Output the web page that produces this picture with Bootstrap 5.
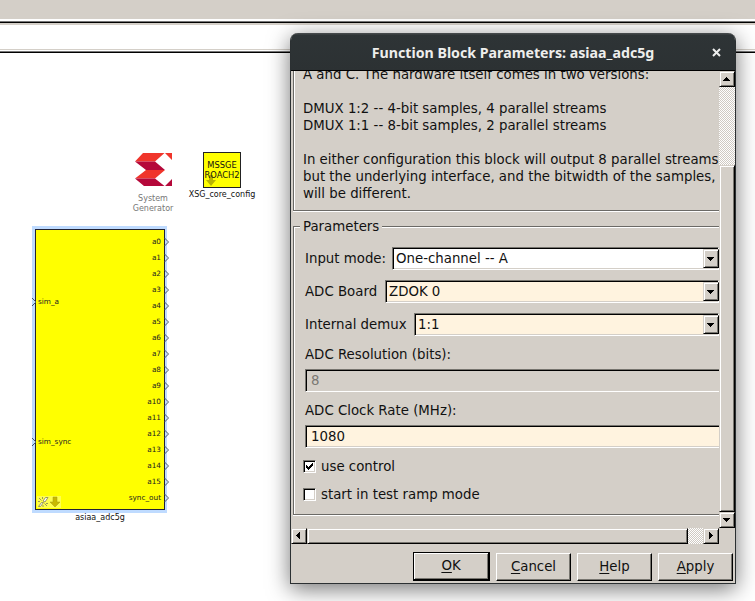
<!DOCTYPE html>
<html lang="en">
<head>
<meta charset="utf-8">
<title>Function Block Parameters: asiaa_adc5g</title>
<link href="https://cdn.jsdelivr.net/npm/bootstrap@5.3.0/dist/css/bootstrap.min.css" rel="stylesheet">
<style>
:root{--face:#d4cfc8;--dk:#6b6a66;--cream:#fff3df}
body{width:755px;height:601px;overflow:hidden;background:#fff;color:#111;font-family:"DejaVu Sans",sans-serif;font-size:13.333px;line-height:17px}
.toolstrip{height:25px;background:linear-gradient(var(--face) 0 19px,#fff 19px 21px,#777 21px 22px,#000 22px 23px,var(--face) 23px)}
.pathstrip{height:28px;background:linear-gradient(#fff 0 24px,#d4cfc8 24px 25px,#fff 25px 26px,#777 26px 27px,#000 27px)}
/* diagram */
.node{position:absolute}
.tiny{font-size:8px;line-height:10px;white-space:nowrap}
.xsg{left:188px;top:152px;width:68px}
.yellow{background:#ff0;border:1px solid #222}
.xsg .yellow{width:38px;height:36px;font-size:8.3px;line-height:10px;padding-top:7px;position:relative}
.xsg .yellow span{position:relative}
.xsg .yellow svg{position:absolute;left:2px;bottom:1px}
.xsg .name1{margin-top:2px}
.sysgen{left:128px;top:152px;width:50px;color:#777}
.sysgen .name2{margin-top:6px;line-height:10px}
.adc{left:32px;top:226px;width:135px;height:287px;background:#bfdbff;padding:3px 2px 3px 3px}
.adc .yellow{height:281px;position:relative;color:#222;border-color:#223}
.adc .cap{padding-top:3px}
.outs{padding-top:4px}
.prt{height:16px;line-height:16px;font-size:7.3px;padding-right:3px;position:relative}
.prt svg{position:absolute;left:100%;top:3px}
.inp{position:absolute;left:2px;font-size:7.3px}
.in-a{top:67px}.in-sync{top:207px}
.inp svg{position:absolute;left:-7px;top:0}
.marks{position:absolute;left:1px;bottom:1px}
/* dialog */
.dlg{position:absolute;left:290px;top:33px;width:446px;height:551px;border:1px solid #2b3032;border-top:0;border-radius:8px 8px 0 0;background:var(--face);box-shadow:0 5px 22px rgba(0,0,0,.55)}
.ttl{height:38px;flex:none;background:linear-gradient(#45494b 0 1px,#2e3436 2px,#2c3133);border-bottom:1px solid #000;border-radius:7px 7px 0 0;color:#eeeeec;font:bold 14.2px/40px "Noto Sans",sans-serif;position:relative}
.ttl svg{position:absolute;right:14px;top:15px}
.view{width:428px;height:457px;overflow:hidden;padding-left:2px}
.fr{border:1px solid var(--dk);border-right:0;box-shadow:inset 1px 0 #fff,0 1px #fff}
.desc{display:flow-root;border-top:0;height:140px;padding-left:9px;white-space:pre}
.desc div{margin-top:-5px}
.prm{margin-top:15px;height:289px;padding:20px 0 0 11px;box-shadow:inset 1px 1px #fff,0 1px #fff;position:relative}
.prm>.lg{position:absolute;left:6px;top:-9px;background:var(--face);padding:0 3px}
.rw{height:23px;margin-bottom:10px}
.l1{width:87px;flex:none}.l2{width:80px;flex:none}.l3{width:109px;flex:none}
.sunk{height:23px;border:1px solid;border-color:#77756f #fff #fff #77756f;box-shadow:inset 1px 1px #000,inset -1px -1px var(--face);background:var(--cream);padding-left:3px;line-height:21px;min-width:0}
.sunk.edit{padding-left:5px;border-right:0;box-shadow:inset 1px 1px #000,inset 0 -1px var(--face)}
.off{background:var(--face);color:#7a7873}
.up{background:var(--face);border:1px solid;border-color:var(--face) #000 #000 var(--face);box-shadow:inset 1px 1px #fff,inset -1px -1px #77756f}
.drop{width:16px;margin:1px -1px 0 0;height:19px;flex:none}
.up svg{display:block}
.lb{height:23px}
.lb2{margin-top:10px}
.ck{height:28px;gap:5px;margin-left:-2px}
.sunk.edit+.ck{margin-top:4px}
.ckb{width:13px;height:13px;background:#fff;border:1px solid;border-color:#77756f #fff #fff #77756f;box-shadow:inset 1px 1px #000,inset -1px -1px var(--face)}
.ckb svg{display:block}
.dither{background:repeating-conic-gradient(#fff 0 25%,#cfcac3 0 50%) 0 0/2px 2px}
.vs{width:16px;height:457px}
.sb{width:16px;height:16px;flex:none}
.hs{width:428px;height:16px}
.thumbv{height:347px}.thumbh{width:381px}
.acts{height:39px;gap:6px;padding:8px 2px 0 0}
.btn3{width:75px;height:28px;margin-top:1px;padding:0;border-color:#fff #000 #000 #fff;box-shadow:inset -1px -1px #77756f;font:inherit;line-height:24px;text-align:center;color:#111}
.btn3.main{width:77px;height:29px;margin-top:0;border:1px solid #000;border-right-width:2px;border-bottom-width:2px;box-shadow:inset 1px 1px #fff,inset -1px -1px #77756f;line-height:26px}
u{text-underline-offset:2px}
</style>
</head>
<body>
<div class="toolstrip"></div>
<div class="pathstrip"></div>

<div class="node sysgen tiny d-flex flex-column align-items-center text-center">
  <svg width="40" height="36" viewBox="0 0 40 36"><path fill="#f0352b" d="M10 1H31.500L22 9.500H2zM32 1H39V8zM13 18H32L22 26.500H2z"/><path fill="#b5083a" d="M2 9.500H22L32 18H13zM2 26.500H22L31.500 34H11zM39 27V34H32z"/></svg>
  <span class="name2">System<br>Generator</span>
</div>
<div class="node xsg tiny d-flex flex-column align-items-center text-center">
  <div class="yellow"><svg width="10" height="11" viewBox="0 0 10 11"><path d="M3 0h4v5h3L5 11 0 5h3z" fill="#b9b400"/></svg><span>MSSGE<br>ROACH2</span></div>
  <span class="name1">XSG_core_config</span>
</div>
<div class="node adc">
  <div class="yellow">
    <div class="outs text-end" id="outs"></div>
    <div class="tiny inp in-a"><svg width="6" height="10" viewBox="0 0 6 10" fill="none" stroke="#456"><path d="M1 1l4 4-4 4"/></svg>sim_a</div>
    <div class="tiny inp in-sync"><svg width="6" height="10" viewBox="0 0 6 10" fill="none" stroke="#456"><path d="M1 1l4 4-4 4"/></svg>sim_sync</div>
    <svg class="marks" width="24" height="12" viewBox="0 0 24 12"><path d="M0 0H24V12H0z" fill="#ffff80" opacity=".6"/><path d="M1.500 10.500l3-4h2l-3 4zM6 5l2.500-3.500H11L8 6zM2 2l2.500 2.500M7.500 7.500L10 10M5.500 1v2M1 5.500h2M9 7.500h2M6 9v2" stroke="#8f8f55" stroke-width=".9" fill="#fff"/><path d="M16 1h4v5h3l-5 5-5-5h3z" fill="#c8b900" stroke="#a49a10" stroke-width=".5"/></svg>
  </div>
  <div class="tiny text-center cap">asiaa_adc5g</div>
</div>

<div class="dlg d-flex flex-column">
  <div class="ttl text-center"><span>Function Block Parameters: asiaa_adc5g</span>
    <svg width="9" height="9" viewBox="0 0 9 9"><path d="M1 1l7 7M8 1l-7 7" stroke="#eee" stroke-width="2"/></svg></div>
  <div class="d-flex">
    <div class="view">
      <div class="fr desc"><div>A and C. The hardware itself comes in two versions:

DMUX 1:2 -- 4-bit samples, 4 parallel streams
DMUX 1:1 -- 8-bit samples, 2 parallel streams

In either configuration this block will output 8 parallel streams
but the underlying interface, and the bitwidth of the samples,
will be different.</div></div>
      <div class="fr prm">
        <span class="lg">Parameters</span>
        <div class="rw d-flex align-items-center"><span class="l1">Input mode:</span><div class="sunk bg-white flex-grow-1 d-flex justify-content-between"><span>One-channel -- A</span><div class="up drop"><svg width="14" height="17" viewBox="0 0 14 17" shape-rendering="crispEdges"><path d="M3 7h7v1H9v1H8v1H7v1H6v-1H5V9H4V8H3z"/></svg></div></div></div>
        <div class="rw d-flex align-items-center"><span class="l2">ADC Board</span><div class="sunk flex-grow-1 d-flex justify-content-between"><span>ZDOK 0</span><div class="up drop"><svg width="14" height="17" viewBox="0 0 14 17" shape-rendering="crispEdges"><path d="M3 7h7v1H9v1H8v1H7v1H6v-1H5V9H4V8H3z"/></svg></div></div></div>
        <div class="rw d-flex align-items-center"><span class="l3">Internal demux</span><div class="sunk flex-grow-1 d-flex justify-content-between"><span>1:1</span><div class="up drop"><svg width="14" height="17" viewBox="0 0 14 17" shape-rendering="crispEdges"><path d="M3 7h7v1H9v1H8v1H7v1H6v-1H5V9H4V8H3z"/></svg></div></div></div>
        <div class="lb">ADC Resolution (bits):</div>
        <div class="sunk edit off">8</div>
        <div class="lb lb2">ADC Clock Rate (MHz):</div>
        <div class="sunk edit">1080</div>
        <div class="ck d-flex align-items-center"><span class="ckb"><svg width="11" height="11" viewBox="0 0 11 11" shape-rendering="crispEdges"><path d="M2 4h1v1h1v1h1V5h1V4h1V3h1V2h1v3H8v1H7v1H6v1H5v1H4V8H3V7H2z"/></svg></span><span>use control</span></div>
        <div class="ck d-flex align-items-center"><span class="ckb"></span><span>start in test ramp mode</span></div>
      </div>
    </div>
    <div class="vs dither d-flex flex-column">
      <div class="up sb"><svg width="14" height="14" viewBox="0 0 14 14" shape-rendering="crispEdges"><path d="M3 9h7V8H9V7H8V6H7V5H6v1H5v1H4v1H3z"/></svg></div>
      <div class="up mt-auto thumbv"></div>
      <div class="up sb"><svg width="14" height="14" viewBox="0 0 14 14" shape-rendering="crispEdges"><path d="M3 5h7v1H9v1H8v1H7v1H6V8H5V7H4V6H3z"/></svg></div>
    </div>
  </div>
  <div class="hs dither d-flex">
    <div class="up sb"><svg width="14" height="14" viewBox="0 0 14 14" shape-rendering="crispEdges"><path d="M8 3v7H7V9H6V8H5V7H4V6h1V5h1V4h1V3z"/></svg></div>
    <div class="up thumbh"></div>
    <div class="up sb ms-auto"><svg width="14" height="14" viewBox="0 0 14 14" shape-rendering="crispEdges"><path d="M5 3v7h1V9h1V8h1V7h1V6H8V5H7V4H6V3z"/></svg></div>
  </div>
  <div class="acts d-flex justify-content-end">
    <button class="up btn3 main"><u>O</u>K</button><button class="up btn3"><u>C</u>ancel</button><button class="up btn3"><u>H</u>elp</button><button class="up btn3"><u>A</u>pply</button>
  </div>
</div>
<script>
const outs=[...Array(16).keys()].map(i=>'a'+i).concat('sync_out');
document.getElementById('outs').innerHTML=outs.map(t=>`<div class="prt">${t}<svg width="5" height="10" viewBox="0 0 5 10" fill="none" stroke="#456"><path d="M.5 1l4 4-4 4"/></svg></div>`).join('');
</script>
<script src="https://cdn.jsdelivr.net/npm/bootstrap@5.3.0/dist/js/bootstrap.bundle.min.js"></script>
</body>
</html>
